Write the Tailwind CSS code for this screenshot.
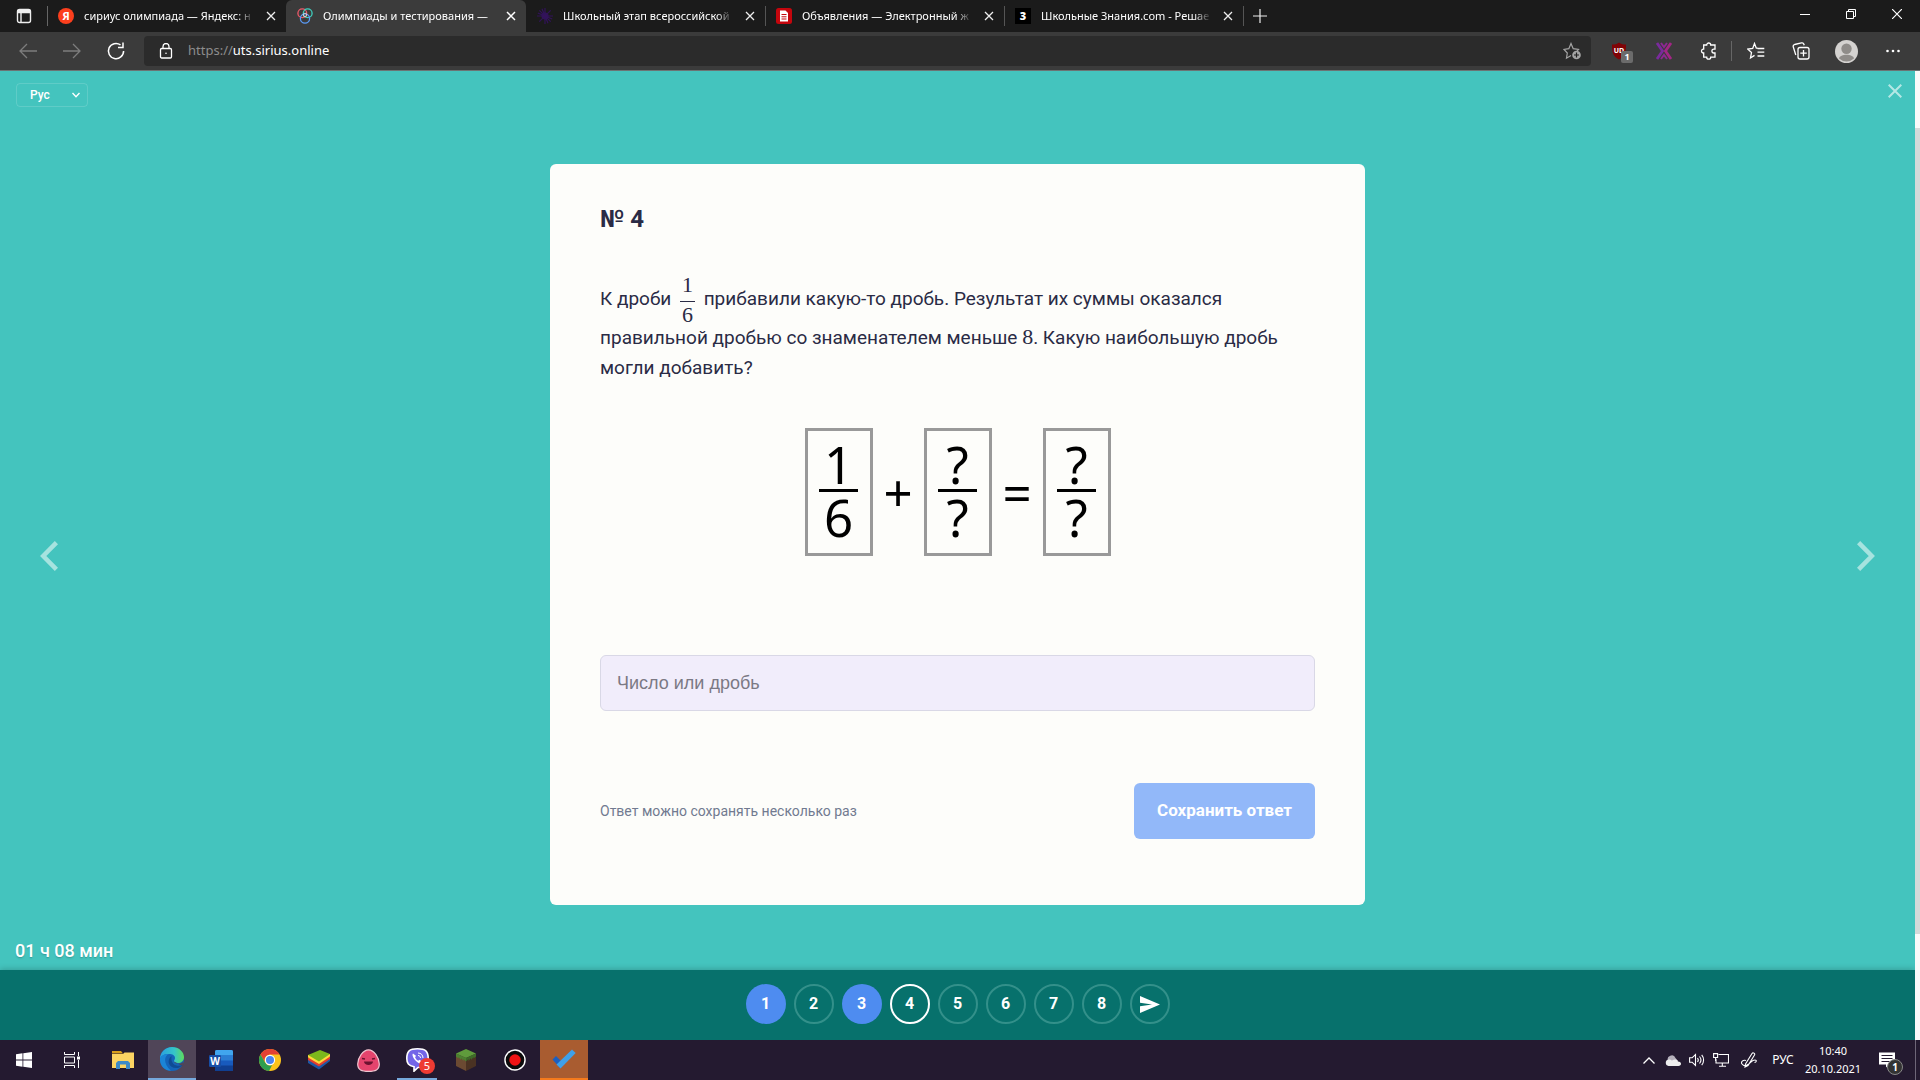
<!DOCTYPE html>
<html lang="ru">
<head>
<meta charset="utf-8">
<title>Олимпиады и тестирования</title>
<script src="https://cdn.jsdelivr.net/npm/@tailwindcss/browser@4"></script>
</head>
<body class="flex min-h-screen flex-col overflow-x-hidden bg-[#44c4be] font-['Roboto',sans-serif]">

<!-- Browser tabs -->
<header class="font-['Noto_Sans',sans-serif] text-white">
  <div class="flex h-8 items-stretch bg-[#1b1b1b] text-[11px]">
    <button aria-label="Меню вкладок" class="flex w-[47px] items-center justify-center">
      <svg class="size-4" viewBox="0 0 16 16" fill="none" stroke="#eee" stroke-width="1.4"><rect x="1.5" y="1.5" width="13" height="13" rx="2"/><path d="M2 3.2h12M5 4v10.500" /><path d="M2 2.500h12v2H2z" fill="#eee"/></svg>
    </button>
    <div class="flex w-[239px] items-center gap-2.5 pl-[11px] pr-2 relative before:absolute before:left-0 before:top-1.5 before:h-5 before:w-px before:bg-[#666]">
      <svg class="size-4 shrink-0" viewBox="0 0 16 16"><circle cx="8" cy="8" r="8" fill="#fc3f1d"/><text x="8" y="12" text-anchor="middle" font-size="11" font-weight="bold" fill="#fff">Я</text></svg>
      <span class="w-[171px] whitespace-nowrap mask-r-from-90% mask-r-to-100%">сириус олимпиада — Яндекс: н</span>
      <button aria-label="Закрыть вкладку" class="shrink-0"><svg class="size-3.5" viewBox="0 0 14 14" stroke="#eee" stroke-width="1.3"><path d="M3 3l8 8M11 3l-8 8"/></svg></button>
    </div>
    <div class="flex w-[240px] items-center gap-2.5 rounded-t-md bg-[#3b3b3b] pl-[11px] pr-2">
      <svg class="size-4 shrink-0" viewBox="0 0 16 16" fill="none" stroke-width="1.3"><circle cx="5.300" cy="5.300" r="4.400" stroke="#f0596a"/><circle cx="10.700" cy="5.300" r="4.400" stroke="#3fd1c0"/><circle cx="8" cy="10.500" r="4.600" stroke="#5a9bf8"/><circle cx="8" cy="7" r="1.800" stroke="#e8e0e0" stroke-width=".8"/></svg>
      <span class="w-[171px] whitespace-nowrap mask-r-from-95% mask-r-to-100%">Олимпиады и тестирования —</span>
      <button aria-label="Закрыть вкладку" class="shrink-0"><svg class="size-3.5" viewBox="0 0 14 14" stroke="#fff" stroke-width="1.5"><path d="M3 3l8 8M11 3l-8 8"/></svg></button>
    </div>
    <div class="flex w-[239px] items-center gap-2.5 pl-[11px] pr-2">
      <svg class="size-4 shrink-0" viewBox="0 0 16 16" stroke="#32135a" stroke-width="1.200"><path d="M8 0v16M0 8h16M2.300 2.300l11.400 11.400M13.700 2.300L2.300 13.700M5 .8l6 14.400M.8 5l14.400 6"/><circle cx="8" cy="8" r="3" fill="#32135a"/></svg>
      <span class="w-[171px] whitespace-nowrap mask-r-from-90% mask-r-to-100%">Школьный этап всероссийской</span>
      <button aria-label="Закрыть вкладку" class="shrink-0"><svg class="size-3.5" viewBox="0 0 14 14" stroke="#eee" stroke-width="1.3"><path d="M3 3l8 8M11 3l-8 8"/></svg></button>
    </div>
    <div class="flex w-[239px] items-center gap-2.5 pl-[11px] pr-2 relative before:absolute before:left-0 before:top-1.5 before:h-5 before:w-px before:bg-[#555]">
      <svg class="size-4 shrink-0" viewBox="0 0 16 16"><rect width="16" height="16" rx="2.500" fill="#c4060d"/><path d="M4 2.500h5.500L12 5v8.500H4z" fill="#fff"/><path d="M5.500 6.500h5M5.500 8.800h5M5.500 11h5" stroke="#c4060d"/></svg>
      <span class="w-[171px] whitespace-nowrap mask-r-from-90% mask-r-to-100%">Объявления — Электронный ж</span>
      <button aria-label="Закрыть вкладку" class="shrink-0"><svg class="size-3.5" viewBox="0 0 14 14" stroke="#eee" stroke-width="1.3"><path d="M3 3l8 8M11 3l-8 8"/></svg></button>
    </div>
    <div class="flex w-[239px] items-center gap-2.5 pl-[11px] pr-2 relative before:absolute before:left-0 before:top-1.5 before:h-5 before:w-px before:bg-[#555]">
      <svg class="size-4 shrink-0" viewBox="0 0 16 16"><rect width="16" height="16" fill="#000"/><text x="8" y="12" text-anchor="middle" font-size="11" font-weight="900" fill="#fff">3</text></svg>
      <span class="w-[171px] whitespace-nowrap mask-r-from-90% mask-r-to-100%">Школьные Знания.com - Решае</span>
      <button aria-label="Закрыть вкладку" class="shrink-0"><svg class="size-3.5" viewBox="0 0 14 14" stroke="#eee" stroke-width="1.3"><path d="M3 3l8 8M11 3l-8 8"/></svg></button>
    </div>
    <button aria-label="Новая вкладка" class="relative flex w-[34px] items-center justify-center before:absolute before:left-0 before:top-1.5 before:h-5 before:w-px before:bg-[#555]">
      <svg class="size-3.5" viewBox="0 0 14 14" stroke="#eee" stroke-width="1.200"><path d="M7 0v14M0 7h14"/></svg>
    </button>
    <div class="ml-auto flex pb-1">
      <button aria-label="Свернуть" class="flex w-[46px] items-center justify-center"><svg class="size-2.5" viewBox="0 0 10 10" stroke="#fff"><path d="M0 5.500h10"/></svg></button>
      <button aria-label="Восстановить" class="flex w-[46px] items-center justify-center"><svg class="size-2.5" viewBox="0 0 10 10" fill="none" stroke="#fff"><path d="M.5 2.500h7v7h-7zM2.500 2.500v-2h7v7h-2"/></svg></button>
      <button aria-label="Закрыть" class="flex w-[46px] items-center justify-center"><svg class="size-2.5" viewBox="0 0 10 10" stroke="#fff" stroke-width="1.200"><path d="M0 0l10 10M10 0L0 10"/></svg></button>
    </div>
  </div>

  <!-- Toolbar -->
  <div class="flex h-[39px] items-center border-b border-[#6b7474] bg-[#3b3b3b] px-1.5">
    <button aria-label="Назад" class="flex w-11 justify-center"><svg class="size-5" viewBox="0 0 20 20" fill="none" stroke="#7d7d7d" stroke-width="1.300"><path d="M19 10H2M9 3l-7 7 7 7"/></svg></button>
    <button aria-label="Вперёд" class="flex w-11 justify-center"><svg class="size-5" viewBox="0 0 20 20" fill="none" stroke="#7d7d7d" stroke-width="1.300"><path d="M1 10h17M11 3l7 7-7 7"/></svg></button>
    <button aria-label="Обновить" class="flex w-11 justify-center"><svg class="size-5" viewBox="0 0 20 20" fill="none" stroke="#fff" stroke-width="1.500"><path d="M17.600 10A7.600 7.600 0 1 1 14.500 3.900M17 1.500v5h-5"/></svg></button>
    <div class="ml-1.5 flex h-[30px] flex-1 items-center rounded-sm bg-[#2b2b2b] pl-[15px] pr-2.5">
      <svg class="h-4 w-3.5 shrink-0" viewBox="0 0 14 16" fill="none" stroke="#fff" stroke-width="1.300"><rect x="1.500" y="5.500" width="11" height="9.500" rx="1.200"/><path d="M4 5.500V3.500a3 3 0 0 1 6 0v2"/><circle cx="7" cy="10.300" r=".8" fill="#fff" stroke="none"/></svg>
      <a href="https://uts.sirius.online" class="ml-[15px] flex-1 text-[13px] text-white"><span class="text-[#8d8d8d]">https://</span>uts.sirius.online</a>
      <button aria-label="В избранное"><svg class="size-[18px]" viewBox="0 0 18 18" fill="none" stroke="#a5a5a5" stroke-width="1.200"><path d="M8 13.500l-4.500 2.700.8-5.200L1 7.500l4.800-.8L8 1.500l2.200 5.200 5.300.8-1.500 1.600"/><circle cx="13.500" cy="13" r="4.300" fill="#a5a5a5" stroke="none"/><path d="M13.500 10.500v5M11 13h5" stroke="#222"/></svg></button>
    </div>
    <div class="flex items-center">
      <button aria-label="uBlock" class="relative ml-[18px] flex w-6 justify-start"><svg class="size-5" viewBox="0 0 20 20"><path d="M10 1.500c2 1.700 4.500 2 7 2 0 8-1 12-7 15-6-3-7-7-7-15 2.500 0 5-.3 7-2z" fill="#800306"/><text x="10" y="12" text-anchor="middle" font-size="7" font-weight="bold" fill="#fff">UD</text></svg><span class="absolute left-3 top-2.5 flex h-3 w-3 items-center justify-center rounded-xs bg-[#6b6b6b] text-[9px] font-bold">1</span></button>
      <button aria-label="Расширение" class="ml-2 flex w-[46px] justify-center"><svg class="size-5" viewBox="0 0 20 20" fill="none" stroke-width="2.800"><path d="M3 2l5.500 8L3 18" stroke="#7a2a9c"/><path d="M17 2l-5.500 8 5.500 8" stroke="#a32686"/><path d="M7 2l3 4 3-4M7 18l3-4 3 4" stroke="#8d2893" stroke-width="2"/></svg></button>
      <button aria-label="Расширения" class="flex w-[44px] justify-center"><svg class="size-[18px]" viewBox="0 0 18 18" fill="none" stroke="#fff" stroke-width="1.300"><path d="M4.500 3h2.200a2 2 0 0 1 4 0H15v4.200h-1.200a1.900 1.900 0 0 0 0 3.800H15v4.200h-4.300a2 2 0 0 1-4 0H3.700V11H3a2 2 0 0 1 0-3.900h.7V3z"/></svg></button>
      <span class="h-5 w-px bg-[#666]"></span>
      <button aria-label="Избранное" class="flex w-[48px] justify-center"><svg class="size-[18px]" viewBox="0 0 18 18" fill="none" stroke="#fff" stroke-width="1.300"><path d="M10.500 6.200H9.300L7.500 1.500 5.700 6.500l-4.900.6 3.700 3.500-1 5.400 4-2.600M10.500 6.500h6.800M10.500 10.200h6.800M10.500 14h6.800"/></svg></button>
      <button aria-label="Коллекции" class="flex w-[42px] justify-center"><svg class="size-[18px]" viewBox="0 0 18 18" fill="none" stroke="#fff" stroke-width="1.300"><rect x="6" y="5.500" width="11" height="11.500" rx="2"/><path d="M11.500 8v6.500M8.300 11.200h6.500M3.800 13L1.300 5A2 2 0 0 1 2.600 2.500L9.500.9a2 2 0 0 1 2.400 1.400l.3 1"/></svg></button>
      <button aria-label="Профиль" class="flex w-[49px] justify-center"><svg class="size-[23px]" viewBox="0 0 23 23"><circle cx="11.500" cy="11.500" r="11.500" fill="#d4d2d0"/><circle cx="11.500" cy="8.800" r="5.200" fill="#8f8c89"/><path d="M4 18.500c1-5 14-5 15 0a11 11 0 0 1-15 0z" fill="#8f8c89"/></svg></button>
      <button aria-label="Ещё" class="flex w-[43px] justify-center"><svg class="h-1 w-3.5" viewBox="0 0 14 4" fill="#fff"><circle cx="1.500" cy="2" r="1.300"/><circle cx="7" cy="2" r="1.300"/><circle cx="12.500" cy="2" r="1.300"/></svg></button>
    </div>
  </div>
</header>

<!-- Page with its scrollbar -->
<div class="flex flex-1">
  <div class="flex flex-1 flex-col">
    <main class="flex flex-1 flex-col text-[#2a2b45]">
      <div class="flex items-start justify-between px-4 pt-3">
        <div class="relative flex items-center text-white">
          <select aria-label="Язык" class="h-6 w-[72px] appearance-none rounded-sm border border-white/15 pl-[13px] text-xs font-medium"><option>Рус</option></select>
          <svg class="pointer-events-none absolute right-2 size-2" viewBox="0 0 8 8" fill="none" stroke="#fff" stroke-width="1.400"><path d="M.5 2L4 5.700 7.500 2"/></svg>
        </div>
        <button aria-label="Закрыть задание" class="-mr-[3px] mt-px"><svg class="size-3.5" viewBox="0 0 14 14" stroke="#b4e8e5" stroke-width="2"><path d="M.7.7l12.600 12.600M13.300.7L.7 13.300"/></svg></button>
      </div>

      <div class="mt-[57px] flex items-center justify-between px-10">
        <button aria-label="Предыдущее задание" class="mt-[43px]"><svg class="h-[30px] w-[18px]" viewBox="0 0 18 30" fill="none" stroke="#a6e3df" stroke-width="4.500"><path d="M16.400 1.600L3.200 15l13.200 13.400"/></svg></button>
        <article class="w-full max-w-[815px] rounded-md bg-[#fdfdfa] px-[50px] pb-[66px] pt-[39px]">
          <h1 class="text-2xl font-bold leading-8">№ 4</h1>
          <p class="mt-[41px] text-[19px] leading-[30px]">К дроби
            <span class="-my-1 mx-1 inline-flex flex-col items-center align-middle font-['Liberation_Serif',serif] text-[22px] leading-[25px]"><span class="border-b border-[#2a2b45] px-0.5 pb-1">1</span><span>6</span></span>
            прибавили какую-то дробь. Результат их суммы оказался правильной дробью со знаменателем меньше <span class="font-['Liberation_Serif',serif] text-[22px] leading-none">8</span>. Какую наибольшую дробь могли добавить?</p>

          <div class="mt-[45px] flex items-center justify-center font-['Noto_Sans',sans-serif] text-[51px] leading-[50px] text-black">
            <div class="flex h-32 w-[68px] flex-col items-center justify-center border-[3px] border-[#999] pb-1"><span>1</span><span class="h-[3px] w-[39px] bg-black"></span><span>6</span></div>
            <span class="w-[51px] text-center">+</span>
            <div class="flex h-32 w-[68px] flex-col items-center justify-center border-[3px] border-[#999] pb-1"><span>?</span><span class="h-[3px] w-[39px] bg-black"></span><span>?</span></div>
            <span class="w-[51px] text-center">=</span>
            <div class="flex h-32 w-[68px] flex-col items-center justify-center border-[3px] border-[#999] pb-1"><span>?</span><span class="h-[3px] w-[39px] bg-black"></span><span>?</span></div>
          </div>

          <input aria-label="Ответ" placeholder="Число или дробь" class="mt-[99px] h-14 w-full rounded-md border border-[#d9d8e6] bg-[#f1edfb] px-4 font-['Liberation_Sans',sans-serif] text-lg placeholder:text-[#7b7984]">

          <div class="mt-[72px] flex items-center justify-between">
            <p class="text-sm text-[#717a90]">Ответ можно сохранять несколько раз</p>
            <button class="h-14 w-[181px] rounded-md bg-[#92b8f9] text-[17px] font-bold text-white">Сохранить ответ</button>
          </div>
        </article>
        <button aria-label="Следующее задание" class="mt-[43px]"><svg class="h-[30px] w-[18px]" viewBox="0 0 18 30" fill="none" stroke="#a6e3df" stroke-width="4.500"><path d="M1.600 1.600L14.800 15 1.600 28.400"/></svg></button>
      </div>

      <p class="mt-auto pb-[5px] pl-[15px] text-lg font-medium leading-7 text-white text-shadow-sm">01 ч 08 мин</p>
    </main>

    <nav aria-label="Задания" class="flex h-[70px] items-center justify-center gap-2 bg-[#07716c] pb-0.5 text-base font-bold text-white shadow-[0_-1px_6px_rgba(0,0,0,0.200)]">
      <button class="size-10 rounded-full bg-[#4e8cf0]">1</button>
      <button class="size-10 rounded-full border-2 border-[#33908a]">2</button>
      <button class="size-10 rounded-full bg-[#4e8cf0]">3</button>
      <button class="size-10 rounded-full border-2 border-white">4</button>
      <button class="size-10 rounded-full border-2 border-[#33908a]">5</button>
      <button class="size-10 rounded-full border-2 border-[#33908a]">6</button>
      <button class="size-10 rounded-full border-2 border-[#33908a]">7</button>
      <button class="size-10 rounded-full border-2 border-[#33908a]">8</button>
      <button aria-label="Завершить" class="flex size-10 items-center justify-center rounded-full border-2 border-[#33908a]"><svg class="h-[17px] w-5" viewBox="0 0 20 17" fill="#fff"><path d="M0 0l20 8.500L0 17V10.300l12-1.800L0 6.700z"/></svg></button>
    </nav>
  </div>
  <div class="w-[5px] bg-[#fafafa] pb-[106px] pt-[57px]"><div class="h-full bg-[#d5dada]"></div></div>
</div>

<!-- Taskbar -->
<footer class="flex h-10 items-stretch bg-[#241a30] font-['Noto_Sans',sans-serif] text-[11px] text-white">
  <button aria-label="Пуск" class="flex w-12 items-center justify-center"><svg class="size-4" viewBox="0 0 16 16" fill="#fff"><path d="M0 2.200L6.500 1.300v6.200H0zM7.300 1.200L16 0v7.500H7.300zM0 8.400h6.500v6.300L0 13.800zM7.300 8.400H16V16l-8.700-1.200z"/></svg></button>
  <button aria-label="Представление задач" class="mr-[3px] flex w-12 items-center justify-center"><svg class="size-4" viewBox="0 0 16 16" fill="none" stroke="#fff"><path d="M.5 0v2.500h10V0M.5 16v-2.500h10V16M.5 5h10v6H.5zM14.500 0v4M14.500 8v8"/><rect x="13" y="4.500" width="3" height="3" fill="#fff" stroke="none"/></svg></button>
  <div class="flex gap-px">
    <button aria-label="Проводник" class="flex w-12 items-center justify-center"><svg class="h-[18px] w-[22px]" viewBox="0 0 22 18"><path d="M0 0h9l2 2.500H0z" fill="#d99f1c"/><path d="M0 3h11l1.500-1.500H22V17H0z" fill="#fcd462"/><path d="M4 18v-6l2-2h10l2 2v6h-4v-4.500H8V18z" fill="#3d8bc8"/></svg></button>
    <button aria-label="Edge" class="flex w-12 items-center justify-center border-b-2 border-[#76a9dc] bg-[#504558]"><svg class="size-6" viewBox="0 0 24 24"><defs><linearGradient id="edgeTop"><stop offset="0" stop-color="#2a9fe0"/><stop offset=".6" stop-color="#35c5c8"/><stop offset="1" stop-color="#5fdc5a"/></linearGradient></defs><circle cx="12" cy="12" r="12" fill="#1464b8"/><path d="M0 12C0 5 5.500 0 12 0c7 0 12 5 12 10 0 4-3 6-6 6-2.500 0-4-1-4-2 0-.8 1-1.300 1-3 0-2.500-2.500-4-6-4-5 0-8 2-9 5z" fill="url(#edgeTop)"/><path d="M9 7c-5 1.500-6 10 2 16.800C4 23.500-.5 18 0 11.500 1.500 8 5 6.800 9 7z" fill="#1b85d6"/><path d="M14 14.500c0 1.200 2 2.300 4.500 2.200 2 0 3.500-.8 4.500-1.700l1 3-1.500 1.200z" fill="#504558"/><path d="M11.500 9c-6 5-2 13 6 12 2-.3 3.500-1.200 5-3C19 20 10 19 11.500 9z" fill="#0e4c94"/></svg></button>
    <button aria-label="Word" class="flex w-12 items-center justify-center"><svg class="h-[21px] w-6" viewBox="0 0 24 21"><rect x="6" width="18" height="21" rx="1.500" fill="#185abd"/><path d="M6 1.500A1.500 1.500 0 0 1 7.500 0h15A1.500 1.500 0 0 1 24 1.500V5.500H6z" fill="#41a5ee"/><path d="M6 5.500h18v5H6z" fill="#2b7cd3"/><path d="M6 15.500h18v4a1.500 1.500 0 0 1-1.500 1.500h-15A1.500 1.500 0 0 1 6 19.500z" fill="#103f91"/><rect y="5" width="12" height="12" rx="1.200" fill="#174ea6"/><text x="6" y="14.500" text-anchor="middle" font-size="10" font-weight="bold" fill="#fff">W</text></svg></button>
    <button aria-label="Chrome" class="flex w-12 items-center justify-center"><svg class="size-[22px]" viewBox="0 0 24 24"><circle cx="12" cy="12" r="12" fill="#fbc31b"/><path d="M1.600 6A12 12 0 0 1 22.400 6H12a6 6 0 0 0-5.200 9z" fill="#e34133"/><path d="M1.600 6l5.200 9a6 6 0 0 0 7.500 2.500L11 24A12 12 0 0 1 1.600 6z" fill="#2f9e4f"/><circle cx="12" cy="12" r="5.600" fill="#fff"/><circle cx="12" cy="12" r="4.400" fill="#4a84ef"/></svg></button>
    <button aria-label="BlueStacks" class="flex w-12 items-center justify-center"><svg class="h-5 w-[22px]" viewBox="0 0 22 20"><path d="M0 13l11 6.500L22 11v-2L0 10z" fill="#1c57a5"/><path d="M0 10l11 6.500L22 9V6.500L0 8z" fill="#e33d2e"/><path d="M0 7.500L11 14l11-7.500V4L0 5z" fill="#ffd93b"/><path d="M0 5l12-5 10 4-11 7.500z" fill="#7cb81c"/></svg></button>
    <button aria-label="Slime Rancher" class="flex w-12 items-center justify-center"><svg class="size-[23px]" viewBox="0 0 23 23"><path d="M11.500.8C17 .8 22.300 9 22.300 15s-4 7.300-10.800 7.300S.7 21 .7 15 6 .8 11.500.8z" fill="#e5446d" stroke="#efc5d0" stroke-width="1.200"/><path d="M7 12.500h9c0 4.500-9 4.500-9 0z" fill="#6d1230"/><path d="M5 9.500l3 .5M18 9.500l-3 .5" stroke="#6d1230" stroke-width="1.600"/></svg></button>
    <button aria-label="Viber" class="relative flex w-12 items-center justify-center"><svg class="h-6 w-[23px]" viewBox="0 0 23 24"><path d="M11.500.8c8 0 10.700 2.500 10.700 9.700S19.500 19.500 12 19.500L8 23.200v-4.500C2.500 17.500.8 15.500.8 10.500.8 3.300 3.500.8 11.500.8z" fill="#7365e8" stroke="#fff" stroke-width="1.600"/><path d="M7 5.500c-2 1.500 2.500 9.500 8 10.300l1.500-2-3-2-1.300 1C10.500 12 9.500 10.500 9 9l1.200-1z" fill="#fff"/><path d="M12 5c3 0 5 2 5 5M12 7.500c1.500 0 2.500 1 2.500 2.500" fill="none" stroke="#fff"/></svg><span class="absolute left-[26px] top-[18px] flex size-4 items-center justify-center rounded-full bg-[#ee3b33] text-[11px]">5</span><span class="absolute bottom-0 left-1 h-0.5 w-10 bg-[#76a9dc]"></span></button>
    <button aria-label="Minecraft" class="flex w-12 items-center justify-center"><svg class="h-[22px] w-5" viewBox="0 0 20 22"><path d="M0 4.500L10 9v13L0 17z" fill="#6b4a32"/><path d="M20 4.500L10 9v13l10-5z" fill="#4a3223"/><path d="M10 0l10 4.500L10 9 0 4.500z" fill="#5f9b3c"/><path d="M0 4.500L10 9v3.500L7.500 10v2L5 9v2L2.500 8v1.500L0 7.500z" fill="#4c8030"/><path d="M20 4.500L10 9v3.500l2.500-2.500v2L15 9v2l2.500-3v1.500l2.500-2z" fill="#3d6a28"/></svg></button>
    <button aria-label="Запись" class="flex w-12 items-center justify-center"><svg class="size-[22px]" viewBox="0 0 23 23"><circle cx="11.500" cy="11.500" r="10.500" fill="#0b0b0b" stroke="#fff" stroke-width="1.500"/><circle cx="11.500" cy="11.500" r="6" fill="#f01414"/></svg></button>
    <button aria-label="To Do" class="flex w-12 items-center justify-center border-b-2 border-[#f57a1c] bg-[#a95c30]"><svg class="h-5 w-6" viewBox="0 0 24 20"><path d="M.5 10.500L4 7l8 8-4 4z" fill="#1c5fc0"/><path d="M4.500 15.500L20 .5 23.700 4 8.500 19.500z" fill="#3fa0e8"/></svg></button>
  </div>
  <div class="ml-auto flex items-center">
    <button aria-label="Скрытые значки" class="flex w-6 justify-center"><svg class="h-[7px] w-3" viewBox="0 0 12 7" fill="none" stroke="#fff" stroke-width="1.300"><path d="M.5 6.500L6 1l5.500 5.500"/></svg></button>
    <button aria-label="OneDrive" class="flex w-6 justify-center"><svg class="h-[11px] w-4" viewBox="0 0 16 11"><path d="M3 6a4 4 0 0 1 7.500-3L13 6z" fill="#b5b0bb"/><path d="M3.500 11a3.300 3.300 0 0 1 0-6.500C5 4.300 6 5 7 5.500c3-2 5.500-1 6 1 2 0 3 1 3 2.300S15 11 13.500 11z" fill="#eee"/></svg></button>
    <button aria-label="Громкость" class="flex w-6 justify-center"><svg class="h-3.5 w-4" viewBox="0 0 16 14" fill="none" stroke="#fff" stroke-width="1.100"><path d="M.6 4.800h2.500L6.500 1.500v11L3.100 9.200H.6zM8.500 5c.8 1 .8 3 0 4M10.500 3.500c1.700 2 1.700 5 0 7M12.700 1.800c2.500 3 2.500 7.400 0 10.400"/></svg></button>
    <button aria-label="Сеть" class="flex w-6 justify-center"><svg class="h-3.5 w-4" viewBox="0 0 16 14" fill="none" stroke="#fff" stroke-width="1.100"><path d="M5.500 1.500h10v8.500H3V6M9.300 10v3M6 13.300h7M.6.600h4V4.500h-4zM2.600 4.500V8"/></svg></button>
    <button aria-label="Windows Ink" class="flex w-8 justify-center"><svg class="size-4" viewBox="0 0 16 16" fill="none" stroke="#fff" stroke-width="1.100"><path d="M4.500 12L11 1.500c1-1.500 3.500 0 2.500 1.500L7 13.500l-3 1.500zM5 8.500C2 7.500-.5 10 1 12c1.500 2 4 2 6 .5 3-2 4-4.500 7-4.500 2 0 1.500 2.500-.5 2.500"/></svg></button>
    <button class="w-9 text-center text-xs">РУС</button>
    <button class="w-16 text-center leading-[18px]"><span class="block">10:40</span><span class="block">20.10.2021</span></button>
    <button aria-label="Уведомления" class="relative ml-3.5 mr-3 flex w-6 justify-start"><svg class="size-4" viewBox="0 0 16 16"><path d="M0 .5h16v12h-6l-3 3v-3H0z" fill="#fff"/><path d="M2.500 3.500h11M2.500 6.500h11M2.500 9.500h8" stroke="#241a30"/></svg><span class="absolute left-2 top-[7px] flex size-4 items-center justify-center rounded-full border border-[#888] bg-[#333] text-[10px] font-bold">1</span></button>
    <span class="mr-1 h-full w-px bg-[#6e6678]"></span>
  </div>
</footer>
</body>
</html>
